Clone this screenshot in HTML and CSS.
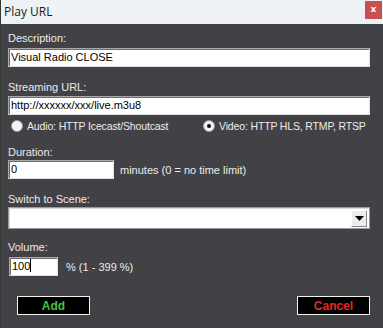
FILE: index.html
```html
<!DOCTYPE html>
<html>
<head>
<meta charset="utf-8">
<link rel="stylesheet" href="styles.css">
</head>
<body>
<div class="window">
  <div class="titlebar">
    <span class="title">Play URL</span>
    <span class="close">x</span>
  </div>
  <div class="content">
    <div class="label l-desc">Description:</div>
    <div class="field wide">Visual Radio CLOSE</div>

    <div class="label l-url">Streaming URL:</div>
    <div class="field wide">http://xxxxxx/xxx/live.m3u8</div>

    <div class="radios">
      <label class="radio"><span class="dot"></span>Audio: HTTP Icecast/Shoutcast</label>
      <label class="radio checked"><span class="dot"></span>Video: HTTP HLS, RTMP, RTSP</label>
    </div>

    <div class="label l-dur">Duration:</div>
    <div class="row">
      <div class="field dur">0</div>
      <span class="hint">minutes (0 = no time limit)</span>
    </div>

    <div class="label l-scene">Switch to Scene:</div>
    <div class="select">
      <span class="arrow"><svg width="9" height="5" viewBox="0 0 9 5"><path d="M0 0H9L4.5 5Z" fill="#000"/></svg></span>
    </div>

    <div class="label l-vol">Volume:</div>
    <div class="row">
      <div class="field vol">100<span class="caret"></span></div>
      <span class="hint">% (1 - 399 %)</span>
    </div>

    <div class="buttons">
      <button class="btn add">Add</button>
      <button class="btn cancel">Cancel</button>
    </div>
  </div>
</div>
</body>
</html>
```

FILE: styles.css
```css
html, body {
  margin: 0;
  padding: 0;
}
body {
  width: 383px;
  height: 328px;
  overflow: hidden;
  background: #424146;
  font-family: "Liberation Sans", Arial, sans-serif;
  font-size: 11px;
}
.window {
  height: 328px;
  border-left: 1px solid #2f3a30;
  box-sizing: border-box;
}
.titlebar {
  height: 24px;
  background: #eef2f6;
  display: flex;
  align-items: flex-start;
  justify-content: space-between;
}
.title {
  font-family: "Open Sans", "Liberation Sans", sans-serif;
  font-size: 12px;
  color: #1a1a1a;
  margin: 4px 0 0 3px;
  line-height: 16px;
}
.close {
  width: 17px;
  height: 18px;
  margin: 1px 1px 0 0;
  background: #c9504f;
  color: #fff;
  font-family: "DejaVu Sans", sans-serif;
  font-weight: bold;
  font-size: 9px;
  line-height: 16px;
  text-align: center;
}
.content {
  padding: 0 12px 0 7px;
  color: #e8e8e8;
}
.label {
  line-height: 14px;
  height: 14px;
  color: #ececec;
}
.l-desc { margin-top: 7px; margin-bottom: 3px; }
.l-url { margin-top: 13px; margin-bottom: 2px; }
.l-dur { margin-top: 12px; margin-bottom: 1px; }
.l-scene { margin-top: 13px; margin-bottom: 1px; }
.l-vol { margin-top: 11px; margin-bottom: 3px; }
.field {
  box-sizing: border-box;
  height: 19px;
  background: #fff;
  border: 1px solid #a8a8a8;
  border-right-color: #e0e0e0;
  border-bottom-color: #e0e0e0;
  box-shadow: inset 1px 1px 0 #6e6e6e;
  color: #000;
  font-family: "Liberation Sans", Arial, sans-serif;
  font-size: 11px;
  line-height: 17px;
  padding-left: 2px;
  white-space: nowrap;
}
.wide { width: 362px; }
.radios {
  display: flex;
  height: 14px;
  margin-top: 4px;
  align-items: center;
  white-space: nowrap;
}
.radio {
  display: flex;
  align-items: center;
  color: #ececec;
  line-height: 14px;
  font-size: 10.5px;
  letter-spacing: -0.15px;
}
.radio:first-child { margin-left: 3px; width: 192px; }
.dot {
  box-sizing: border-box;
  width: 12px;
  height: 12px;
  border-radius: 50%;
  background: #f4f4f4;
  border: 1px solid #9a9a9a;
  margin-right: 4px;
  position: relative;
  flex: none;
}
.checked .dot::after {
  content: "";
  position: absolute;
  left: 3px;
  top: 3px;
  width: 4px;
  height: 4px;
  border-radius: 50%;
  background: #111;
}
.row {
  display: flex;
  align-items: center;
}
.dur { width: 106px; height: 19px; }
.vol { width: 49px; height: 19px; margin-left: 1px; }
.hint {
  margin-left: 6px;
  color: #ececec;
}
.vol + .hint { margin-left: 8px; }
.caret {
  display: inline-block;
  width: 1px;
  height: 13px;
  background: #000;
  vertical-align: -2px;
}
.select {
  box-sizing: border-box;
  width: 362px;
  height: 22px;
  background: #fff;
  border: 1px solid #9b9b9b;
  box-shadow: inset 1px 1px 0 #d8d8d8;
  display: flex;
  justify-content: flex-end;
  align-items: center;
  padding-right: 2px;
}
.arrow {
  box-sizing: border-box;
  width: 16px;
  height: 17px;
  background: #ececec;
  border: 1px solid #fff;
  border-right-color: #888;
  border-bottom-color: #888;
  display: flex;
  align-items: center;
  justify-content: center;
}
.buttons {
  display: flex;
  justify-content: space-between;
  margin-top: 20px;
  padding: 0 0 0 9px;
  width: 362px;
  box-sizing: border-box;
}
.btn {
  box-sizing: border-box;
  width: 73px;
  height: 19px;
  background: #000;
  border: 1px solid #f2f2f2;
  font-family: "Liberation Sans", Arial, sans-serif;
  font-weight: bold;
  font-size: 12px;
  padding: 0;
  line-height: 16px;
}
.add { color: #45c43a; }
.cancel { color: #e42828; }
```
